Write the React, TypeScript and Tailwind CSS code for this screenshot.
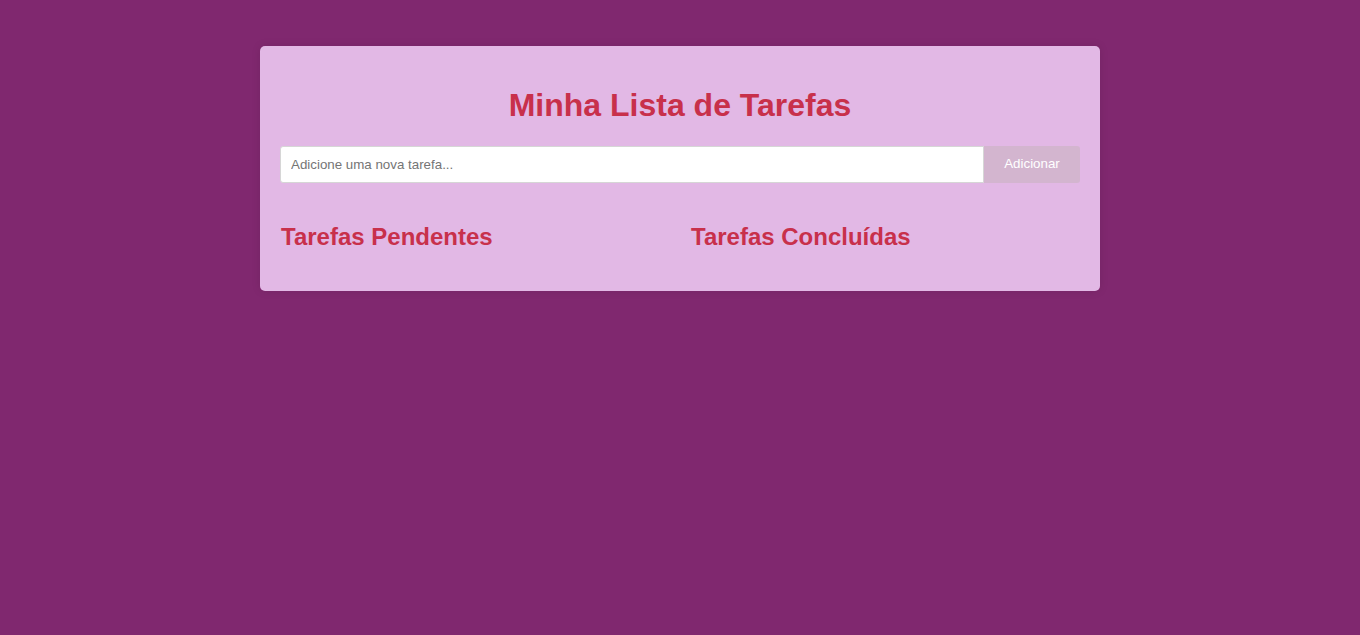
export default function App() {
  return (
    <div className="min-h-[635px] w-full bg-[#80286f] pt-[46px] font-['Liberation_Sans',Arial,sans-serif]">
      <div className="mx-auto w-[840px] rounded-[5px] bg-[#e2b8e5] p-5 shadow-[0_0_10px_rgba(0,0,0,0.1)]">
        <h1 className="my-[21.44px] text-center text-[32px] font-bold leading-[37px] text-[#c8304b]">
          Minha Lista de Tarefas
        </h1>
        <div className="flex h-[37px]">
          <input
            className="h-[37px] flex-1 rounded-l-[3px] border border-[#d6d6d6] bg-white px-[10px] text-[13.33px] text-[#333] outline-none placeholder:text-[#757575]"
            placeholder="Adicione uma nova tarefa..."
          />
          <button className="h-[37px] w-[96px] rounded-r-[3px] bg-[#d3b5cf] text-[13.33px] text-white">
            Adicionar
          </button>
        </div>
        <div className="mt-5 flex gap-5">
          <div className="w-[390px] pl-px">
            <h2 className="my-[19.92px] text-[24px] font-bold leading-[28px] text-[#c8304b]">Tarefas Pendentes</h2>
          </div>
          <div className="w-[390px] pl-px">
            <h2 className="my-[19.92px] text-[24px] font-bold leading-[28px] text-[#c8304b]">Tarefas Concluídas</h2>
          </div>
        </div>
      </div>
    </div>
  );
}
